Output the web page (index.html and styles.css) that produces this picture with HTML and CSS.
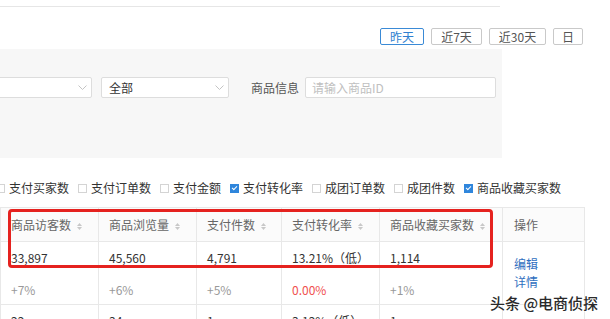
FILE: index.html
```html
<!DOCTYPE html>
<html lang="zh-CN">
<head>
    <meta charset="UTF-8">
    <title>商品数据</title>
    <link rel="stylesheet" href="styles.css">
</head>
<body>
    <div class="topline"></div>

    <div class="datebar">
        <span class="dbtn w2 active">昨天</span>
        <span class="dbtn w3">近7天</span>
        <span class="dbtn w4">近30天</span>
        <span class="dbtn w1">日</span>
    </div>

    <div class="filter">
        <div class="frow">
            <div class="select first">
                <span class="val"></span>
                <svg class="chev" width="9" height="5" viewBox="0 0 9 5"><polyline points="0.5,0.5 4.5,4.5 8.5,0.5" fill="none" stroke="#c4c4c4" stroke-width="1"/></svg>
            </div>
            <div class="select">
                <span class="val">全部</span>
                <svg class="chev" width="9" height="5" viewBox="0 0 9 5"><polyline points="0.5,0.5 4.5,4.5 8.5,0.5" fill="none" stroke="#c4c4c4" stroke-width="1"/></svg>
            </div>
            <span class="flabel">商品信息</span>
            <div class="finput">请输入商品ID</div>
        </div>
    </div>

    <div class="checks">
        <span class="ck"><i class="cb"></i>支付买家数</span>
        <span class="ck"><i class="cb"></i>支付订单数</span>
        <span class="ck"><i class="cb"></i>支付金额</span>
        <span class="ck"><i class="cb on"></i>支付转化率</span>
        <span class="ck"><i class="cb"></i>成团订单数</span>
        <span class="ck"><i class="cb"></i>成团件数</span>
        <span class="ck"><i class="cb on"></i>商品收藏买家数</span>
    </div>

    <div class="tablewrap">
        <table class="grid">
            <colgroup>
                <col class="c1"><col class="c2"><col class="c3"><col class="c4"><col class="c5"><col class="c6">
            </colgroup>
            <thead>
                <tr>
                    <th>商品访客数<svg class="sort" width="5" height="9" viewBox="0 0 5 9"><polygon points="0,4 2.5,1 5,4" fill="#c8c8c8"/><polygon points="0,5 2.5,8 5,5" fill="#c8c8c8"/></svg></th>
                    <th>商品浏览量<svg class="sort" width="5" height="9" viewBox="0 0 5 9"><polygon points="0,4 2.5,1 5,4" fill="#c8c8c8"/><polygon points="0,5 2.5,8 5,5" fill="#c8c8c8"/></svg></th>
                    <th>支付件数<svg class="sort" width="5" height="9" viewBox="0 0 5 9"><polygon points="0,4 2.5,1 5,4" fill="#c8c8c8"/><polygon points="0,5 2.5,8 5,5" fill="#c8c8c8"/></svg></th>
                    <th>支付转化率<svg class="sort" width="5" height="9" viewBox="0 0 5 9"><polygon points="0,4 2.5,1 5,4" fill="#c8c8c8"/><polygon points="0,5 2.5,8 5,5" fill="#c8c8c8"/></svg></th>
                    <th>商品收藏买家数<svg class="sort" width="5" height="9" viewBox="0 0 5 9"><polygon points="0,4 2.5,1 5,4" fill="#c8c8c8"/><polygon points="0,5 2.5,8 5,5" fill="#c8c8c8"/></svg></th>
                    <th class="op">操作</th>
                </tr>
            </thead>
            <tbody>
                <tr>
                    <td><div class="v">33,897</div><div class="d">+7%</div></td>
                    <td><div class="v">45,560</div><div class="d">+6%</div></td>
                    <td><div class="v">4,791</div><div class="d">+5%</div></td>
                    <td><div class="v">13.21%（低）</div><div class="d red">0.00%</div></td>
                    <td><div class="v">1,114</div><div class="d">+1%</div></td>
                    <td class="op"><a>编辑</a><a>详情</a></td>
                </tr>
                <tr>
                    <td><div class="v">22</div><div class="d">+3%</div></td>
                    <td><div class="v">34</div><div class="d">+2%</div></td>
                    <td><div class="v">1</div><div class="d">+1%</div></td>
                    <td><div class="v">3.12%（低）</div><div class="d">+0%</div></td>
                    <td><div class="v">1</div><div class="d">+1%</div></td>
                    <td class="op"><a>编辑</a><a>详情</a></td>
                </tr>
            </tbody>
        </table>
        <div class="mark"></div>
        <div class="wm">头条 @电商侦探</div>
    </div>
</body>
</html>
```

FILE: styles.css
```css
/* 商品数据列表 */
body {
    margin: 0;
    background: #ffffff;
    color: #333333;
    font-family: "Noto Sans CJK SC", sans-serif;
    font-size: 12px;
    line-height: 16px;
    overflow: hidden;
}

.topline {
    width: 500px;
    height: 6px;
    border-bottom: 1px solid #e6e6e6;
}

/* 日期按钮 */
.datebar {
    display: flex;
    justify-content: flex-end;
    gap: 7px;
    margin-top: 21px;
    padding-right: 27px;
}
.dbtn {
    height: 17px;
    box-sizing: border-box;
    border: 1px solid #c9c9c9;
    border-radius: 2px;
    color: #555555;
    line-height: 15px;
    text-align: center;
}
.dbtn.w1 { width: 30px; }
.dbtn.w2 { width: 44px; }
.dbtn.w3 { width: 51px; }
.dbtn.w4 { width: 57px; }
.dbtn.active {
    border-color: #3a8ad6;
    color: #2f7fd0;
}

/* 筛选区 */
.filter {
    width: 502px;
    height: 109px;
    margin-top: 4px;
    background: #f7f7f7;
    box-sizing: border-box;
    padding-top: 28px;
}
.frow {
    display: flex;
    align-items: center;
}
.select {
    display: flex;
    align-items: center;
    justify-content: space-between;
    width: 128px;
    height: 21px;
    box-sizing: border-box;
    padding: 0 4px 0 7px;
    margin-left: 9px;
    background: #ffffff;
    border: 1px solid #dddddd;
    border-radius: 2px;
}
.select.first {
    width: 132px;
    margin-left: -40px;
}
.flabel {
    margin-left: 22px;
    color: #555555;
}
.finput {
    width: 191px;
    height: 21px;
    box-sizing: border-box;
    margin-left: 6px;
    padding: 0 6px;
    background: #ffffff;
    border: 1px solid #dddddd;
    border-radius: 2px;
    color: #c0c0c0;
    line-height: 19px;
}

/* 指标勾选 */
.checks {
    display: flex;
    align-items: center;
    margin: 22px 0 0 -4px;
    white-space: nowrap;
}
.ck {
    display: flex;
    align-items: center;
    margin-right: 9px;
    color: #333333;
}
.cb {
    width: 9px;
    height: 9px;
    box-sizing: border-box;
    border: 1px solid #d4d4d4;
    background: #ffffff;
    margin-right: 4px;
    position: relative;
}
.cb.on {
    background: #2f86dc;
    border-color: #2f86dc;
}
.cb.on::after {
    content: "";
    position: absolute;
    left: 2px;
    top: 0;
    width: 2px;
    height: 4px;
    border: solid #ffffff;
    border-width: 0 1px 1px 0;
    transform: rotate(45deg);
}

/* 表格 */
.tablewrap {
    position: relative;
    margin-top: 11px;
}
.grid {
    width: 584px;
    table-layout: fixed;
    border-collapse: collapse;
}
.c1 { width: 98px; }
.c2 { width: 98px; }
.c3 { width: 85px; }
.c4 { width: 98px; }
.c5 { width: 123px; }
.c6 { width: 82px; }
.grid th,
.grid td {
    border: 1px solid #e8e8e8;
    padding: 0 0 0 10px;
    text-align: left;
    white-space: nowrap;
    overflow: hidden;
}
.grid th {
    height: 33px;
    background: #fbfbfb;
    color: #666666;
    font-weight: normal;
}
.sort {
    margin-left: 6px;
    vertical-align: -1px;
}
.grid td {
    height: 63px;
    vertical-align: top;
    padding-top: 8px;
    box-sizing: border-box;
}
.v {
    color: #333333;
}
.d {
    margin-top: 16px;
    color: #999999;
}
.d.red {
    color: #f0504f;
}
.grid .op {
    padding-left: 11px;
    box-shadow: -5px 0 5px -3px rgba(0, 0, 0, 0.12);
}
.grid td.op {
    vertical-align: middle;
    padding-top: 0;
    line-height: 18px;
}
.op a {
    display: block;
    color: #2f6fc0;
}

/* 标注框 */
.mark {
    position: absolute;
    left: 8px;
    top: 2px;
    width: 485px;
    height: 59px;
    box-sizing: border-box;
    border: 3px solid #e5221f;
    border-radius: 4px;
}
.wm {
    position: absolute;
    left: 490px;
    top: 87px;
    font-size: 15px;
    line-height: 18px;
    color: #2a2a2a;
    font-weight: 500;
    text-shadow: 0 0 2px #ffffff, 0 0 2px #ffffff;
    white-space: nowrap;
}
```
